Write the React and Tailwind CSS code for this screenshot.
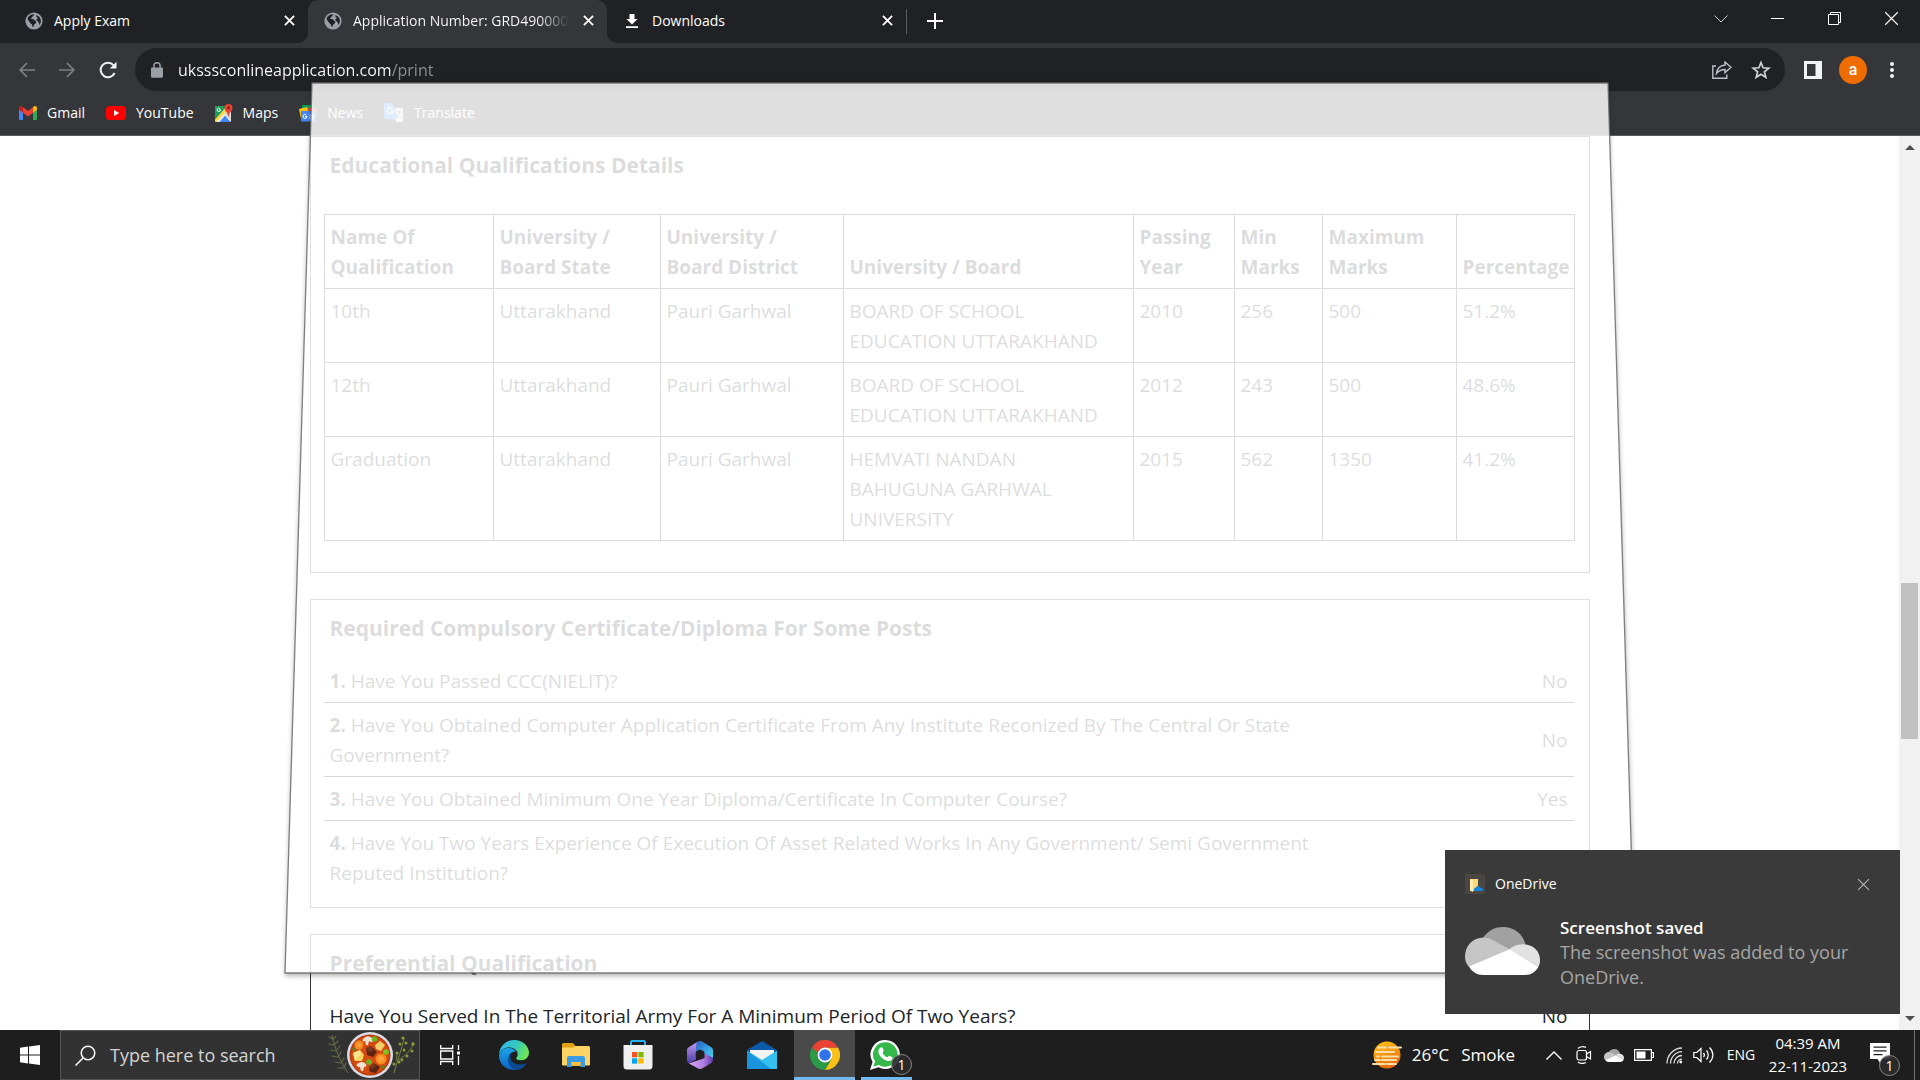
import React from "react";

const FONT = "font-['Open_Sans','Noto_Sans',sans-serif]";

/* ---------- browser icons ---------- */
function Globe() {
  return (
    <svg viewBox="0 0 18 18" className="size-[18px] shrink-0">
      <circle cx="9" cy="9" r="8.6" fill="#9aa0a6" />
      <path d="M2.500 6.500C3.500 4 6 2.400 8.600 2.300c.6 1.200-.2 1.900-1.300 2.400-.2 1.200-1.300 1-1.300 2.100 1.200.3 2.700-.1 3.300 1.100.4 1.100 1.900.7 2 2-.1 1.600-1.900 1.800-2.200 2.900-.2 1-.7 2-1.700 2.200.1-1.700-.5-2.700-1.700-3.400C4.900 10.300 3.400 9 2.500 6.500z" fill="#202124" />
      <path d="M11.300 2.900c2.700.8 4.600 3.300 4.600 6.100 0 1.500-.5 2.800-1.300 3.900-.5-.9-.3-1.900-1.200-2.600-.1-1.300-1.600-1.100-2.200-2.200.3-1.200 1.500-1 1.500-2.300-1-.6-1.500-1.500-1.400-2.900z" fill="#202124" />
    </svg>
  );
}

function Cross({ className, width = 2 }) {
  return (
    <svg viewBox="0 0 12 12" className={className} fill="none" stroke="currentColor" strokeWidth={width}>
      <path d="M1 1l10 10M11 1L1 11" />
    </svg>
  );
}

function DownloadIcon() {
  return (
    <svg viewBox="0 0 18 18" className="size-[18px] shrink-0" fill="#fff">
      <path d="M6.500 2h5v5h3L9 12.500 3.500 7h3zM3 14.300h12v1.700H3z" />
    </svg>
  );
}

function Tab({ icon, title, active, fade }) {
  return (
    <div className={active ? "relative flex h-full w-[299px] items-center rounded-t-[10px] bg-[#35363a] pb-0.5 pl-4" : "flex h-full w-[299px] items-center pb-0.5 pl-4"}>
      {active && (
        <>
          <svg viewBox="0 0 10 10" className="absolute bottom-0 -left-2.5 size-2.5" fill="#35363a"><path d="M10 0v10H0A10 10 0 0 0 10 0z" /></svg>
          <svg viewBox="0 0 10 10" className="absolute -right-2.5 bottom-0 size-2.5" fill="#35363a"><path d="M0 0v10h10A10 10 0 0 1 0 0z" /></svg>
        </>
      )}
      {icon}
      <span className={fade ? "ml-[11px] w-[216px] overflow-hidden bg-[linear-gradient(90deg,#fff_185px,transparent_216px)] bg-clip-text text-sm whitespace-nowrap text-transparent" : "ml-[11px] w-[216px] overflow-hidden text-sm whitespace-nowrap text-white"}>
        {title}
      </span>
      <button aria-label={"Close " + title} className="ml-3.5 text-white"><Cross className="size-[11px]" /></button>
    </div>
  );
}

function TabStrip() {
  return (
    <header className="flex h-[43px] shrink-0 bg-[#202124] pl-[9px]">
      <div className="flex h-[43px] items-center">
        <Tab icon={<Globe />} title="Apply Exam" />
        <Tab icon={<Globe />} title="Application Number: GRD490000" active fade />
        <Tab icon={<DownloadIcon />} title="Downloads" />
        <div className="h-[25px] w-px bg-[#5a5c60]" />
        <button aria-label="New tab" className="ml-5 pb-0.5 text-white">
          <svg viewBox="0 0 16 16" className="size-4" stroke="currentColor" strokeWidth="2"><path d="M8 0v16M0 8h16" /></svg>
        </button>
      </div>
      <div className="ml-auto flex h-[37px] items-center text-white">
        <button aria-label="Search tabs" className="flex w-[57px] justify-center">
          <svg viewBox="0 0 14 8" className="h-2 w-3.5" fill="none" stroke="#ccc"><path d="M.5.5L7 7 13.500.5" /></svg>
        </button>
        <button aria-label="Minimize" className="flex w-[57px] justify-center"><span className="h-px w-[13px] bg-white" /></button>
        <button aria-label="Restore" className="flex w-[57px] justify-center">
          <svg viewBox="0 0 13 13" className="size-[13px]" fill="none" stroke="#fff"><path d="M.5 2.500h10v10H.5zM2.500 2.500V.5h10v10h-2" /></svg>
        </button>
        <button aria-label="Close window" className="flex w-[57px] justify-center"><Cross className="size-[15px]" width={0.9} /></button>
      </div>
    </header>
  );
}

function Arrow({ flip }) {
  return (
    <svg viewBox="0 0 16 16" className={flip ? "size-4 -scale-x-100" : "size-4"} fill="none" stroke="#7d8084" strokeWidth="1.700">
      <path d="M16 8H1.500M8 1L1.200 8 8 15" />
    </svg>
  );
}

function Toolbar() {
  return (
    <div className="flex h-[53px] shrink-0 items-center bg-[#35363a] pl-[19px]">
      <button aria-label="Back" className="mr-6"><Arrow /></button>
      <button aria-label="Forward" className="mr-6"><Arrow flip /></button>
      <button aria-label="Reload">
        <svg viewBox="0 0 18 18" className="size-[18px]" fill="none" stroke="#f1f3f4" strokeWidth="2">
          <path d="M15.600 12A7.300 7.300 0 1 1 14.500 4.200" /><path d="M17.500 .8v6.700h-6.700z" fill="#f1f3f4" stroke="none" />
        </svg>
      </button>
      <div className="ml-[18px] flex h-[43px] flex-1 items-center rounded-full bg-[#202124] pr-3.5 pl-4">
        <svg viewBox="0 0 12 16" className="h-4 w-3" fill="#9aa0a6">
          <path d="M1.500 5.500h9A1.200 1.200 0 0 1 12 6.800v7.400A1.500 1.500 0 0 1 10.500 15.700h-9A1.500 1.500 0 0 1 0 14.200V6.800a1.200 1.200 0 0 1 1.500-1.300z" />
          <path d="M2.900 6V3.800a3.100 3.100 0 0 1 6.200 0V6" fill="none" stroke="#9aa0a6" strokeWidth="1.500" />
        </svg>
        <input aria-label="Address and search bar" defaultValue="uksssconlineapplication.com/print" className="ml-[15px] h-8 min-w-0 flex-1 bg-[linear-gradient(90deg,#fff_214px,#8e9196_214px)] bg-clip-text text-base text-transparent outline-none" />
        <button aria-label="Share" className="mr-[19px]">
          <svg viewBox="0 0 20 18" className="h-[18px] w-5" fill="none" stroke="#bdc1c6" strokeWidth="1.400">
            <path d="M4 5H.8v12.200h14V13.500" /><path d="M13 1l6 5.300-6 5.300V8.500c-3.500 0-6 1-8.500 4C5 8 8 4.500 13 4z" />
          </svg>
        </button>
        <button aria-label="Bookmark this tab">
          <svg viewBox="0 0 20 20" className="size-5" fill="none" stroke="#d0d3d6" strokeWidth="1.700">
            <path d="M10 2.500l2.100 5.300 5.700.4-4.400 3.600 1.400 5.500L10 14.300l-4.800 3 1.400-5.500L2.200 8.200l5.700-.4z" />
          </svg>
        </button>
      </div>
      <button aria-label="Side panel" className="ml-[19px]">
        <svg viewBox="0 0 18 18" className="size-[18px]" fill="#f1f3f4"><path fillRule="evenodd" d="M0 0h18v18H0zM3 3v12h8.500V3z" /></svg>
      </button>
      <button aria-label="Profile" className="ml-[17px] flex size-7 items-center justify-center rounded-full bg-[#ef6c00] font-[Roboto] text-base font-medium text-white">a</button>
      <button aria-label="Menu" className="mr-[26px] ml-[23px]">
        <svg viewBox="0 0 4 18" className="h-[18px] w-1" fill="#f1f3f4"><circle cx="2" cy="3" r="2" /><circle cx="2" cy="9" r="2" /><circle cx="2" cy="15" r="2" /></svg>
      </button>
    </div>
  );
}

function GmailIcon() {
  return (
    <svg viewBox="0 0 18 14" className="h-3.5 w-[18px]">
      <path d="M0 2v11a1 1 0 0 0 1 1h3V5.500z" fill="#4285f4" />
      <path d="M18 2v11a1 1 0 0 1-1 1h-3V5.500z" fill="#34a853" />
      <path d="M4 1.200v5.600l5 3.700 5-3.700V1.200L9 5z" fill="#ea4335" />
      <path d="M0 1.900C0 .2 2-.5 3.200.5L4 1.200v5.600L0 3.800z" fill="#c5221f" />
      <path d="M18 1.900C18 .2 16-.5 14.800.5L14 1.200v5.600l4-3z" fill="#fbbc04" />
    </svg>
  );
}
function YouTubeIcon() {
  return (
    <svg viewBox="0 0 20 14" className="h-3.5 w-5"><rect width="20" height="14" rx="3.500" fill="#f00" /><path d="M8 4v6l5.200-3z" fill="#fff" /></svg>
  );
}
function MapsIcon() {
  return (
    <svg viewBox="0 0 18 18" className="size-[18px]">
      <rect x="0" y="2" width="16" height="16" rx="1.500" fill="#e8eaed" />
      <path d="M0 3.500A1.500 1.500 0 0 1 1.500 2H12L0 16z" fill="#1e9d55" />
      <path d="M3 18L9 10.500 15.500 18z" fill="#4285f4" />
      <path d="M0 15.500L11.500 3.500l1 2.500L1.500 18A1.500 1.500 0 0 1 0 16.500z" fill="#fdd835" />
      <path d="M1.500 18L9 10l1.200 1.500L4.500 18z" fill="#e8eaed" />
      <path d="M16 16.500L9.800 10l2-2 4.200 4z" fill="#d5d8db" />
      <path d="M5.500 5.800H4.200M5.500 5.800A1.700 1.700 0 1 1 5 4.600" fill="none" stroke="#fff" strokeWidth="1" />
      <path d="M13.500 0a4 4 0 0 1 4 4c0 2.800-3 3.800-3.700 8.500h-.6C12.500 7.800 9.500 6.800 9.500 4a4 4 0 0 1 4-4z" fill="#ea4335" />
      <circle cx="13.500" cy="4" r="1.400" fill="#8c1a12" />
    </svg>
  );
}
function NewsIcon() {
  return (
    <svg viewBox="0 0 18 18" className="size-[18px]">
      <path d="M3 1h12v7H3z" fill="#0c9d58" /><path d="M0 5l8-2 3 9-9 3z" fill="#ffc107" /><path d="M18 5l-8-2-3 9 9 3z" fill="#ea4335" />
      <rect x="2" y="7" width="14" height="10.500" rx="1" fill="#4285f4" />
      <path d="M8 12.400H6M8 12.400a2 2 0 1 1-.6-1.500M10.500 11h4M10.500 12.800h4M10.500 14.600h4" fill="none" stroke="#fff" />
    </svg>
  );
}
function TranslateIcon() {
  return (
    <svg viewBox="0 0 20 20" className="size-5">
      <path d="M7 5h12v14h-7z" fill="#e0e0e0" /><path d="M0 1.500A1.500 1.500 0 0 1 1.500 0H9l5 16H1.500A1.500 1.500 0 0 1 0 14.500z" fill="#4285f4" />
      <path d="M9.500 7.500H6.500M9.200 7.500A3 3 0 1 1 8 5.300" fill="none" stroke="#fff" strokeWidth="1.300" />
      <path d="M12.500 9h5M15 8v1c0 2-1 4-2 5M13.500 11l4 4" fill="none" stroke="#757575" />
    </svg>
  );
}

const BOOKMARKS = [
  ["Gmail", GmailIcon], ["YouTube", YouTubeIcon], ["Maps", MapsIcon], ["News", NewsIcon], ["Translate", TranslateIcon],
];

function Bookmarks() {
  return (
    <nav className="flex h-10 shrink-0 items-center gap-[21px] border-b border-[#5c5d61] bg-[#35363a] pb-1.5 pl-[19px]">
      {BOOKMARKS.map(([name, Icon]) => (
        <a key={name} href="#" className="flex items-center gap-2.5 text-sm text-white"><Icon />{name}</a>
      ))}
    </nav>
  );
}

/* ---------- page ---------- */
const COLUMNS = [
  ["Name Of Qualification", "w-[169px]"], ["University / Board State", "w-[167px]"], ["University / Board District", "w-[183px]"],
  ["University / Board", "w-[290px]"], ["Passing Year", "w-[101px]"], ["Min Marks", "w-[88px]"], ["Maximum Marks", "w-[134px]"], ["Percentage", "w-[118px]"],
];
const ROWS = [
  ["10th", "Uttarakhand", "Pauri Garhwal", "BOARD OF SCHOOL EDUCATION UTTARAKHAND", "2010", "256", "500", "51.2%"],
  ["12th", "Uttarakhand", "Pauri Garhwal", "BOARD OF SCHOOL EDUCATION UTTARAKHAND", "2012", "243", "500", "48.6%"],
  ["Graduation", "Uttarakhand", "Pauri Garhwal", "HEMVATI NANDAN BAHUGUNA GARHWAL UNIVERSITY", "2015", "562", "1350", "41.2%"],
];
const QUESTIONS = [
  ["Have You Passed CCC(NIELIT)?", "No"],
  ["Have You Obtained Computer Application Certificate From Any Institute Reconized By The Central Or State Government?", "No"],
  ["Have You Obtained Minimum One Year Diploma/Certificate In Computer Course?", "Yes"],
  ["Have You Two Years Experience Of Execution Of Asset Related Works In Any Government/ Semi Government Reputed Institution?", "No"],
];

function Card({ title, children, className }) {
  return (
    <section className={className + " border border-[#333] pt-[13px] pr-[15px] pl-[13px]"}>
      <h2 className="px-1.5 text-[21px] leading-[30px] font-bold">{title}</h2>
      {children}
    </section>
  );
}

function Page() {
  return (
    <main className="min-w-0 flex-1 overflow-hidden bg-white text-[19px] leading-[30px] text-[#212529]">
      <div className="mx-auto flex w-[1280px] max-w-full flex-col gap-[26px]">
        <Card title="Educational Qualifications Details" className="pb-[31px]">
          <table className="mt-[34px] w-full table-fixed border-collapse">
            <thead>
              <tr>
                {COLUMNS.map(([name, width]) => (
                  <th key={name} className={width + " border border-[#212529] p-1.5 pt-[7px] text-left align-bottom font-bold"}>{name}</th>
                ))}
              </tr>
            </thead>
            <tbody>
              {ROWS.map((row) => (
                <tr key={row[0]}>
                  {row.map((cell, i) => <td key={i} className="border border-[#212529] p-1.5 pt-[7px] align-top">{cell}</td>)}
                </tr>
              ))}
            </tbody>
          </table>
        </Card>
        <Card title="Required Compulsory Certificate/Diploma For Some Posts" className="pb-[13px]">
          <table className="mt-4 w-full border-collapse">
            <tbody>
              {QUESTIONS.map(([question, answer], i) => (
                <tr key={question} className="border-b border-black last:border-b-0">
                  <td className="w-4/5 p-1.5 pt-[7px]"><b>{i + 1}.</b> {question}</td>
                  <td className="p-1.5 pt-[7px] text-right">{answer}</td>
                </tr>
              ))}
            </tbody>
          </table>
        </Card>
        <Card title="Preferential Qualification" className="pb-[13px]">
          <table className="mt-4 w-full border-collapse">
            <tbody>
              <tr>
                <td className="w-4/5 p-1.5 pt-[7px]">Have You Served In The Territorial Army For A Minimum Period Of Two Years?</td>
                <td className="p-1.5 pt-[7px] text-right">No</td>
              </tr>
            </tbody>
          </table>
        </Card>
      </div>
    </main>
  );
}

function Scrollbar() {
  return (
    <div className="flex w-[21px] shrink-0 flex-col items-center bg-[#f1f1f1]">
      <svg viewBox="0 0 10 5" className="mt-[9px] h-[5px] w-2.5" fill="#505050"><path d="M0 5l5-5 5 5z" /></svg>
      <div className="min-h-0 grow-[431]" />
      <div className="w-[17px] grow-[156] bg-[#c1c1c1]" />
      <div className="min-h-0 grow-[276]" />
      <svg viewBox="0 0 10 5" className="mb-[9px] h-[5px] w-2.5" fill="#505050"><path d="M0 0l5 5 5-5z" /></svg>
    </div>
  );
}

/* Translucent sheet of a closing window, wider at its foot */
function ClosingWindow() {
  return (
    <svg viewBox="0 0 1920 1080" preserveAspectRatio="none" className="pointer-events-none absolute inset-0 h-full w-full">
      <defs>
        <filter id="sheet" x="-5%" y="-5%" width="110%" height="110%"><feGaussianBlur stdDeviation="2.500" /></filter>
        <mask id="outside"><rect width="1920" height="1080" fill="#fff" /><path d="M312 83H1608L1635 973H285z" fill="#000" /></mask>
      </defs>
      <path d="M312 84H1608L1636 976H285z" fill="#000" fillOpacity=".3" filter="url(#sheet)" mask="url(#outside)" />
      <path d="M312 83H1608L1635 973H285z" fill="#fff" fillOpacity=".845" />
      <path d="M312 83H1608L1635 973H285z" fill="none" stroke="#6a6a6a" strokeOpacity=".85" strokeWidth="1.300" />
    </svg>
  );
}

function Cloud({ className }) {
  return (
    <svg viewBox="0 0 75 48" className={className}>
      <path d="M18 11C23 3 31 0 38 0c11 0 20 7 22.500 17.500L44 23z" fill="#a1a1a1" />
      <path d="M4 40C1 37 0 33 0 29.500 0 19 8 10.500 18.500 10.500c4 0 7 1 10 3L45 22.500z" fill="#c6c6c6" />
      <path d="M44 22.500c4-3.500 9-5.200 14.500-5.200C68 17.300 75 24.500 75 33c0 2.500-.5 4.500-1.500 6.500z" fill="#e2e2e2" />
      <path d="M4 39.500L44.500 22.300l29 17.200C71 44.800 66 48 60 48H18C12 48 7 45 4 39.500z" fill="#fff" />
    </svg>
  );
}

function Toast() {
  return (
    <aside className="absolute right-5 bottom-4 w-[455px] bg-[#3a3a3a] px-5 pt-6 pb-6">
      <div className="flex h-5 items-center">
        <svg viewBox="0 0 20 20" className="size-5">
          <rect width="20" height="20" fill="#4a4642" /><path d="M5 5h8v12H5z" fill="#fbd775" /><path d="M5 5l3 1.500V18L5 16.500z" fill="#ffeab0" />
          <path d="M9 16.500c-.5-2 1-3 2-3 .8-2 3.500-2 4 0 2 0 3 1 3 2 0 1.200-1 1.500-1.500 1.500h-6C9.800 17 9.200 17 9 16.500z" fill="#1487dd" />
        </svg>
        <span className="ml-2.5 text-sm text-white">OneDrive</span>
        <button aria-label="Dismiss" className="mr-2.5 ml-auto text-[#b5b5b5]"><Cross className="size-[13px]" width={1} /></button>
      </div>
      <div className="mt-[21px] flex">
        <Cloud className="mt-3 mr-5 h-12 w-[75px]" />
        <div className="text-[18px] leading-[25px]">
          <p className="text-[17px] font-semibold text-white">Screenshot saved</p>
          <p className="w-[300px] text-[#a6a6a6]">The screenshot was added to your OneDrive.</p>
        </div>
      </div>
    </aside>
  );
}

/* ---------- taskbar ---------- */
function Soup() {
  return (
    <svg viewBox="0 0 90 48" className="h-12 w-[90px]">
      <g fill="none" stroke="#7b6a45" strokeWidth="1"><path d="M5 4c3 14 8 26 16 38" /></g>
      <g fill="none" stroke="#77803c" strokeWidth="1"><path d="M77 7c-2 12-7 22-10 35M86 14c-4 8-10 12-14 15M70 24c-1 4 0 6 1 8" /></g>
      <g stroke="#5f7049" strokeWidth="1.100" strokeLinecap="round">
        <path d="M6 8l-4-2M6 9l3-4M7 14l-5-1M7 14l4-4M9 20l-5-1M9 20l4-5M11 26l-6-1M11 26l3-5M14 32l-6-1M14 32l3-5M17 37l-6 0M17 37l2-5" />
      </g>
      <g fill="#8a9c3c"><circle cx="76" cy="7" r="1.600" /><circle cx="79" cy="12" r="1.500" /><circle cx="73" cy="13" r="1.500" /><circle cx="86" cy="13" r="1.700" /><circle cx="85" cy="20" r="1.500" /><circle cx="77" cy="19" r="1.500" /><circle cx="80" cy="25" r="1.500" /><circle cx="70" cy="22" r="1.500" /><circle cx="72" cy="31" r="1.500" /><circle cx="67" cy="33" r="1.500" /><circle cx="75" cy="29" r="1.400" /></g>
      <circle cx="43" cy="24" r="23" fill="#d9dce6" /><circle cx="43" cy="24" r="20.500" fill="#b93a0c" /><circle cx="43" cy="24" r="19" fill="#d54a10" />
      <path d="M36 8q4-5 9-1c2 2 1 4-1 4l-2-1-1 4-2 0-1-4c-2 1-3 0-2-2z" fill="#efe2d3" /><path d="M30 33q5-4 9 0c1 2 0 3-2 3l-1 4-2 0-1-4c-3 0-4-1-3-3z" fill="#efe2d3" />
      <circle cx="32" cy="14" r="4.500" fill="#f58a1f" /><circle cx="32" cy="14" r="2" fill="#fba23c" /><circle cx="54" cy="28" r="5.500" fill="#f58a1f" /><circle cx="54" cy="28" r="3" fill="#fba23c" />
      <path d="M48 14l5-4 5 4-4 6-5-2z" fill="#f6cf68" /><path d="M26 22l7-3 4 5-2 6-7 0z" fill="#fbd25c" /><path d="M26 22l7-3 1 4-6 7z" fill="#fee58f" />
      <path d="M39 17l5-2 6 6-4 5-6-2z" fill="#5b2414" /><path d="M42 36l5-4 6 4-4 6-6-1z" fill="#5b2414" /><path d="M39 17l5-2 2 4-4 2z" fill="#7a3a22" /><path d="M42 36l5-4 2 3-4 3z" fill="#7a3a22" />
      <circle cx="47.500" cy="8" r="2.800" fill="#6cb71f" /><circle cx="59" cy="21" r="2.800" fill="#7cc421" /><circle cx="42" cy="31" r="2.800" fill="#6cb71f" /><circle cx="27" cy="18" r="1.600" fill="#4e8a1c" /><circle cx="56" cy="36" r="1.800" fill="#4e8a1c" />
    </svg>
  );
}

function EdgeIcon() {
  return (
    <svg viewBox="0 0 30 30" className="size-[30px]">
      <defs>
        <linearGradient id="eg1" x1="0" y1="0" x2="1" y2=".3"><stop offset="0" stopColor="#2fb6ee" /><stop offset=".6" stopColor="#34c8c0" /><stop offset="1" stopColor="#6be35a" /></linearGradient>
        <linearGradient id="eg2" x1="0" y1="0" x2="0" y2="1"><stop offset="0" stopColor="#1ca4e8" /><stop offset="1" stopColor="#0b62c4" /></linearGradient>
      </defs>
      <path d="M0 14C1 5.500 7.500 0 15.200 0 23.500 0 30 6 30 12.800c0 4.500-3.600 7.500-7.800 7.500-3.400 0-5-1-5-2 0-.9 1.500-1.600 1.500-4.200C18.700 10 14.500 7.500 10 7.500 5.500 7.500 1.500 9.800 0 14z" fill="url(#eg1)" />
      <path d="M0 15.500C.5 10.500 4.800 8 9.500 8c4 0 6.500 2 7.500 4-3.500-.8-7.500 1.800-7.500 7C9.500 24 13 28.500 18 29.700c-1 .2-2 .3-3 .3C6.500 30 0 23.500 0 15.500z" fill="url(#eg2)" />
      <path d="M11.500 17c0 5 4.500 7.500 9.500 7.500 3 0 5-1 6.500-1.500C25.500 27 21.500 30 17 30 12 28.800 8.500 24.500 9.500 18.500 10 15 12.500 13 14.500 13.200 12.500 13.800 11.500 15 11.500 17z" fill="#0c4a92" />
    </svg>
  );
}
function ExplorerIcon() {
  return (
    <svg viewBox="0 0 28 24" className="h-6 w-7">
      <path d="M0 1.500A1.500 1.500 0 0 1 1.500 0H11l2.500 3H26v5H0z" fill="#e0a010" /><path d="M0 4.500h11L13.500 3H26.500A1.500 1.500 0 0 1 28 4.500v17A1 1 0 0 1 27 22.500H1a1 1 0 0 1-1-1z" fill="#fdd365" />
      <path d="M5 24V15a2 2 0 0 1 2-2h14a2 2 0 0 1 2 2v9h-4.500v-5h-9v5z" fill="#3b9ae0" /><path d="M9.500 19h9v4h-9z" fill="#f3bd42" />
    </svg>
  );
}
function StoreIcon() {
  return (
    <svg viewBox="0 0 30 30" className="size-[30px]">
      <path d="M8 6V2.200A1.200 1.200 0 0 1 9.200 1h11.600A1.200 1.200 0 0 1 22 2.200V6" fill="none" stroke="#28b0ee" strokeWidth="2" />
      <path d="M.5 5h29v21a3.500 3.500 0 0 1-3.500 3.500H4A3.500 3.500 0 0 1 .5 26z" fill="#efefef" />
      <path d="M9 12h5.300v5.300H9z" fill="#f25022" /><path d="M15.300 12h5.300v5.300h-5.300z" fill="#7fba00" /><path d="M9 18.300h5.300v5.300H9z" fill="#00a4ef" /><path d="M15.300 18.300h5.300v5.300h-5.300z" fill="#ffb900" />
    </svg>
  );
}
function M365Icon() {
  return (
    <svg viewBox="0 0 26 28" className="h-7 w-[26px]">
      <defs>
        <linearGradient id="m1" x1="0" y1="0" x2="0" y2="1"><stop offset="0" stopColor="#c79af2" /><stop offset="1" stopColor="#4b3fa8" /></linearGradient>
        <linearGradient id="m2" x1="0" y1="0" x2="1" y2="1"><stop offset="0" stopColor="#2a5fc6" /><stop offset="1" stopColor="#45d6f5" /></linearGradient>
        <linearGradient id="m3" x1="0" y1="0" x2="1" y2="0"><stop offset="0" stopColor="#d9a5f4" /><stop offset=".6" stopColor="#b07fe0" /><stop offset="1" stopColor="#5b3aa8" /></linearGradient>
      </defs>
      <path d="M11 .5L2 6C.7 6.800 0 8 0 9.500v9.800c0 1.500 1 2.700 2 3.200l7-4V10z" fill="url(#m1)" />
      <path d="M9.500 1.500L12 .2c1-.3 2-.2 3 .3l9 5.500c1.300.8 2 2 2 3.500V17l-8.500-3.500L17 10.500 13 8.500 9 10.500z" fill="url(#m2)" />
      <path d="M2 22.500l9 5c1.300.7 2.700.7 4 0l9-5.200c1.200-.8 2-2 2-3.500v-2l-8.500-4.500v4.700z" fill="url(#m3)" />
      <path d="M13 8.800l4.300 2.500v5L13 18.800l-4.300-2.500v-5z" fill="#1e1e1e" />
    </svg>
  );
}
function MailIcon() {
  return (
    <svg viewBox="0 0 30 28" className="h-7 w-[30px]">
      <path d="M15 0l15 9H0z" fill="#0a5aa8" /><path d="M0 9h30l-8 12H8z" fill="#0b4f94" /><path d="M3 9h24v6l-12 5L3 15z" fill="#f3f3f3" />
      <path d="M0 9.500L15 19 30 9.500V28H0z" fill="#35c0f2" /><path d="M0 9.500l24 18.500H0z" fill="#1a94dd" />
    </svg>
  );
}
function ChromeIcon() {
  return (
    <svg viewBox="0 0 30 30" className="size-[30px]">
      <path d="M15 7.500h13a15 15 0 0 1-13 22.500l6.500-11.300z" fill="#fbc116" />
      <path d="M2 7.500l6.500 11.300A7.500 7.500 0 0 0 21.500 18.800L15 30A15 15 0 0 1 2 7.500z" fill="#2a9a48" />
      <path d="M2 7.500A15 15 0 0 1 28 7.500H15a7.500 7.500 0 0 0-6.500 11.300z" fill="#ea4335" />
      <path d="M2 7.500l6.500 11.300L11 15z" fill="#2a9a48" />
      <circle cx="15" cy="15" r="7.400" fill="#fff" /><circle cx="15" cy="15" r="5.800" fill="#2f74ea" />
    </svg>
  );
}
function WhatsAppIcon() {
  return (
    <svg viewBox="0 0 30 30" className="size-[30px]">
      <path d="M15.500 0A14.500 14.500 0 1 1 8.500 27.300L0 30l2.600-8A14.500 14.500 0 0 1 15.500 0z" fill="#fff" />
      <path d="M15.500 2.300A12.200 12.200 0 1 1 9 24.900L3.400 26.600l1.700-5.300A12.200 12.200 0 0 1 15.500 2.300z" fill="#35b84b" />
      <path d="M10.800 7.500c.7-.3 1.500-.2 1.800.6l1 2.500c.3.800-.8 1.500-1.100 2.200 1 2 2.600 3.500 4.800 4.500.8-.4 1.300-1.800 2.200-1.500l2.500 1.200c.6.4.5 1.300.2 1.900-.8 1.700-2.700 2.400-4.500 2-4.600-1.200-8.300-4.500-9.300-8.700-.4-1.900.8-4 2.400-4.700z" fill="#fff" />
    </svg>
  );
}

function TaskButton({ label, children, width = "w-[62px]" }) {
  return <button aria-label={label} className={width + " flex h-full items-center justify-center"}>{children}</button>;
}

function Badge({ className }) {
  return <span className={className + " absolute flex size-[21px] items-center justify-center rounded-full border border-[#8a8a8a] bg-[#2b2b2b]/90 text-sm text-white"}>1</span>;
}

function Taskbar() {
  return (
    <footer className="flex h-[50px] shrink-0 bg-[#1e1e1e] text-white">
      <TaskButton label="Start" width="w-[60px]">
        <svg viewBox="0 0 20 20" className="size-5" fill="#fff"><path d="M0 2.700L8 1.600v7.900H0zM9 1.500L20 0v9.500H9zM0 10.500h8v7.900l-8-1.100zM9 10.500h11V20L9 18.500z" /></svg>
      </TaskButton>
      <label className="flex w-[360px] items-center border border-[#555] bg-[#323232] pl-3.5">
        <svg viewBox="0 0 21 21" className="size-[21px] shrink-0" fill="none" stroke="#fff" strokeWidth="1.500"><circle cx="13" cy="8" r="6.800" /><path d="M8 13L.5 20.500" /></svg>
        <input aria-label="Search" placeholder="Type here to search" className="ml-3.5 h-10 w-[217px] text-[18px] outline-none placeholder:text-[#d4d4d4]" />
        <Soup />
      </label>
      <TaskButton label="Task View" width="w-[60px]">
        <svg viewBox="0 0 20 20" className="size-5" fill="none" stroke="#fff" strokeWidth="1.300"><path d="M.7 0v3.500h12V0M.7 20v-3.500h12V20M.7 6h12v8H.7zM18.500 0v5M18.500 11v9" /><path d="M17 6.500h3v3h-3z" fill="#fff" stroke="none" /></svg>
      </TaskButton>
      <div className="ml-[3px] flex">
        <TaskButton label="Edge"><EdgeIcon /></TaskButton>
        <TaskButton label="File Explorer"><ExplorerIcon /></TaskButton>
        <TaskButton label="Microsoft Store"><StoreIcon /></TaskButton>
        <TaskButton label="Microsoft 365"><M365Icon /></TaskButton>
        <TaskButton label="Mail"><MailIcon /></TaskButton>
      </div>
      <button aria-label="Chrome" className="ml-px flex h-full w-[61px] items-center justify-center border-b-[3px] border-[#76b9ed] bg-[#4a4a4a] pt-[3px]"><ChromeIcon /></button>
      <button aria-label="WhatsApp" className="relative ml-1.5 flex h-full w-[51px] items-center border-b-[3px] border-[#76b9ed] pt-[3px] pl-[9px]">
        <WhatsAppIcon /><Badge className="right-0 bottom-0.5" />
      </button>
      <div className="ml-auto flex items-center">
        <button className="mr-[31px] flex items-center text-[17px]">
          <svg viewBox="0 0 30 30" className="mr-2.5 size-[30px]">
            <defs><linearGradient id="sun" x1="0" y1="0" x2=".4" y2="1"><stop offset="0" stopColor="#ffc814" /><stop offset="1" stopColor="#ee6c0c" /></linearGradient></defs>
            <circle cx="15" cy="15" r="13.500" fill="url(#sun)" />
            <g stroke="#f6dfae" strokeWidth="2" strokeLinecap="round"><path d="M6 7.500h8M17 7.500h12M4 12h18M5 16.500h2M10 16.500h16M3 20h5M10 20h14M1 24h12M15 24h9" /></g>
          </svg>
          26°C<span className="ml-3">Smoke</span>
        </button>
        <button aria-label="Hidden icons"><svg viewBox="0 0 16 9" className="h-[9px] w-4" fill="none" stroke="#fff" strokeWidth="1.400"><path d="M.5 8.500L8 1l7.500 7.500" /></svg></button>
        <svg viewBox="0 0 16 18" className="ml-3.5 h-[18px] w-4" fill="none" stroke="#fff" strokeWidth="1.200"><rect x="1" y="4.500" width="9.500" height="9.500" rx="2" /><path d="M10.500 8l4-2.500v7.500l-4-2.500M2 2.500C4 .3 8 .3 10 1.500M2 16c2 1.800 6 1.800 8 .6" /></svg>
        <Cloud className="ml-3 h-[13px] w-5" />
        <svg viewBox="0 0 20 12" className="ml-2.5 h-3 w-5" fill="none" stroke="#fff" strokeWidth="1.200"><path d="M.6.6h16.800v10.800H.6zM17.500 3.500h1.900v5h-1.900" /><path d="M2.500 2.500h9v7h-9z" fill="#fff" stroke="none" /></svg>
        <svg viewBox="0 0 17 17" className="ml-3 size-[17px]" fill="none" stroke="#ddd" strokeWidth="1.300"><path d="M1 16.500C1 8 8 1 16 1M4.500 16.500C4.500 10 10 4.700 16 4.700M8 16.500c0-4.500 4-8 8-8M11.500 16.500c0-2.500 2-4.300 4.500-4.300" /><circle cx="14.800" cy="15" r="1.400" fill="#fff" stroke="none" /></svg>
        <svg viewBox="0 0 21 18" className="ml-2.5 h-[18px] w-[21px]" fill="none" stroke="#fff" strokeWidth="1.200"><path d="M.8 6.500h3L8 2.500v13l-4.200-4h-3zM10.500 7c1 1.200 1 3 0 4M13.500 4.500c2.300 2.500 2.300 6.500 0 9M16.500 1.500c4.500 4.500 4.500 10.500 0 15" /></svg>
        <button className="ml-3 w-[30px] text-sm">ENG</button>
        <div className="ml-3 w-20 text-center text-[15px] leading-[23px] whitespace-nowrap">04:39 AM<br />22-11-2023</div>
        <button aria-label="Notifications" className="relative ml-[22px] h-[50px] w-[30px]">
          <svg viewBox="0 0 20 20" className="mb-1 size-5" fill="#fff"><path fillRule="evenodd" d="M0 0h20v16h-7l-3 4-2.500-4H0zM3.500 3.500v1.200h13V3.500zM3.500 7.300v1.200h13V7.300zM3.500 11v1.200h9V11z" /></svg>
          <Badge className="right-0 bottom-1" />
        </button>
        <div className="mr-[5px] ml-3.5 h-[50px] w-px bg-[#707070]" />
      </div>
    </footer>
  );
}

export default function App() {
  return (
    <div className={FONT + " relative flex h-screen flex-col overflow-hidden bg-white"}>
      <div className="relative flex min-h-0 flex-1 flex-col">
        <TabStrip />
        <Toolbar />
        <Bookmarks />
        <div className="flex min-h-0 flex-1"><Page /><Scrollbar /></div>
      </div>
      <ClosingWindow />
      <div className="relative"><Toast /></div>
      <div className="relative"><Taskbar /></div>
    </div>
  );
}
